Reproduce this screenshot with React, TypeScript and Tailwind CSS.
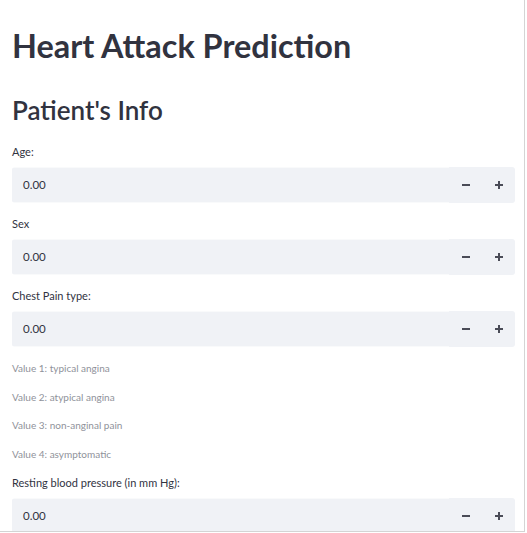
import React from "react";

function NumberInput({ label }: { label: string }) {
  return (
    <div className="flex flex-col">
      <div className="text-[11px] leading-[14px] text-[#31333f] h-[14px] mb-[8px]">{label}</div>
      <div className="flex h-[36px] bg-[#f0f2f6] rounded-[3px] w-[503px]">
        <div className="flex-1 flex items-center pl-[11px] text-[11.5px] text-[#31333f] border-y border-white/60">0.00</div>
        <div className="w-[34px] flex items-center justify-center">
          <svg width="8" height="2" viewBox="0 0 8 2"><rect width="8" height="2" fill="#4a4c57" /></svg>
        </div>
        <div className="w-[32px] flex items-center justify-center">
          <svg width="8" height="8" viewBox="0 0 8 8"><rect y="3" width="8" height="2" fill="#4a4c57" /><rect x="3" width="2" height="8" fill="#4a4c57" /></svg>
        </div>
      </div>
    </div>
  );
}

export default function App() {
  return (
    <div className="w-[527px] h-[533px] bg-white" style={{ fontFamily: "Lato, 'Liberation Sans', sans-serif" }}>
      <div className="w-[525px] h-[532px] border-r border-b border-[#d4d4d4] overflow-hidden px-[12px]">
        <h1 className="text-[32.4px] font-bold text-[#31333f] leading-[38px] mt-[27px]">Heart Attack Prediction</h1>
        <h2 className="text-[26px] text-[#31333f] leading-[30px] mt-[30px] font-semibold">Patient's Info</h2>
        <div className="mt-[20px] flex flex-col gap-[14px]">
          <NumberInput label="Age:" />
          <NumberInput label="Sex" />
          <NumberInput label="Chest Pain type:" />
        </div>
        <div className="mt-[14px] flex flex-col gap-[14.5px] text-[10px] leading-[14px] text-[#8f929a]">
          <div>Value 1: typical angina</div>
          <div>Value 2: atypical angina</div>
          <div>Value 3: non-anginal pain</div>
          <div>Value 4: asymptomatic</div>
        </div>
        <div className="mt-[15px]">
          <NumberInput label="Resting blood pressure (in mm Hg):" />
        </div>
      </div>
    </div>
  );
}
